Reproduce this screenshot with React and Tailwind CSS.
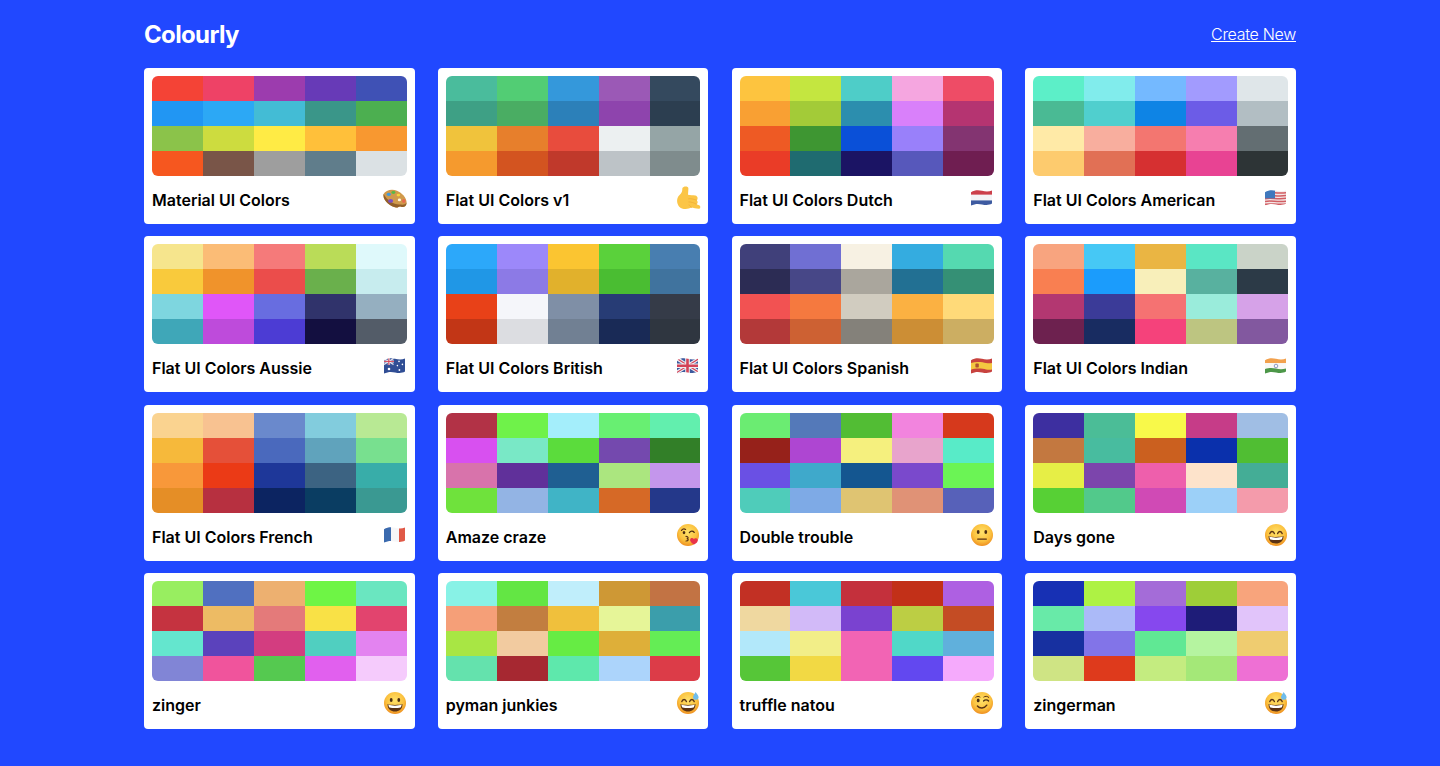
import { useId } from 'react';

const palettes = [
  { name: 'Material UI Colors', emoji: 'palette', colors: ['F44336','EE4266','9C3CAE','673AB7','3F51B5','2196F3','2CA8F5','43BCD5','3A9689','4CAF50','8BC34A','CDDC3F','FFEB45','FFC03A','F89830','F6571F','795548','9E9E9E','607D8B','DBE1E4'] },
  { name: 'Flat UI Colors v1', emoji: 'shaka', colors: ['4ABC9C','52CD74','3498DB','9B59B6','34495E','3EA085','4AAD63','2C80B9','8E44AD','2C3E50','F0C33C','E77F2C','E84C3D','ECF0F1','95A5A6','F59A2E','D35420','C0392B','BDC3C7','7F8C8D'] },
  { name: 'Flat UI Colors Dutch', emoji: 'nl', colors: ['FDC43F','C4E640','4ECDC8','F5A6E0','EE4C66','F9A033','A3CB38','2C8EAE','D980FA','B53471','EE5A24','3E9632','0A50D8','9980FA','833471','EA3C27','1F6B70','1B1464','5758BB','6F1E51'] },
  { name: 'Flat UI Colors American', emoji: 'us', colors: ['5CEFC8','81ECEC','74B9FF','A29BFE','DFE6E9','4ABA94','50CFCE','0E84E5','6C5CE7','B2BEC3','FFEAA7','F8AE9E','F37670','F67EAF','636E72','FDCB6E','E17055','D63031','E84393','2D3436'] },
  { name: 'Flat UI Colors Aussie', emoji: 'au', colors: ['F6E58D','FBBC76','F57A7A','BADC58','DFF9FB','F9CA3C','F0932B','EB4D4B','6AB04C','C7ECEE','7ED6DF','E056F8','686DE0','30336B','95AFC0','3FA7B8','BE4BDB','4C3CD4','130F40','535C68'] },
  { name: 'Flat UI Colors British', emoji: 'gb', colors: ['2CA8FA','9C88FA','FBC531','5AD13B','487EB0','2097E6','8C7AE6','E1B12C','4ABD32','40739E','E84118','F5F6FA','7F8FA6','273C75','353B48','C23616','DCDDE1','718093','192A56','2F3640'] },
  { name: 'Flat UI Colors Spanish', emoji: 'es', colors: ['40407A','706FD3','F7F1E3','34ACE0','55D9B0','2C2C54','474787','AAA69D','227093','359075','F25252','F5793F','D1CCC0','FBB142','FFDA79','B33939','CD6133','84817A','CC8E35','CCAE62'] },
  { name: 'Flat UI Colors Indian', emoji: 'in', colors: ['F8A47F','46C8F5','EAB543','5AE6C4','CAD3C8','F97F51','1B9CFC','F8EFBA','58B19F','2C3A47','B33771','3B3B98','F57272','9AECDB','D6A2E8','6D214F','182C61','F5427B','BDC581','82589F'] },
  { name: 'Flat UI Colors French', emoji: 'fr', colors: ['FAD390','F8C291','6A89CC','82CCDD','B8E994','F6B93B','E55039','4A69BD','60A3BC','78E08F','F8983A','EB3A16','1E3799','3C6382','38ADA9','E58E26','B73040','0C2461','0A3D62','3A9992'] },
  { name: 'Amaze craze', emoji: 'kiss', colors: ['B23246','6FF24A','A4EEFB','68EF72','62EFAE','D850F0','79E8C6','5BDC3C','7449AE','327F28','D873AB','60309A','1F5F92','ABE67F','C496EC','6FE23C','93B4E4','40B4C6','D66926','24388A'] },
  { name: 'Double trouble', emoji: 'neutral', colors: ['6BEC72','5479B9','52BD34','F284DE','D6391C','96211A','AE46D2','F5F07E','E8A4CC','58EBC8','6A50E4','3FA9CB','145690','7A49CC','6BF455','4FCCBA','7EAAE6','DFC472','E09276','5761B9'] },
  { name: 'Days gone', emoji: 'grin', colors: ['3D2FA0','4BBD97','F8F94A','C63C88','A0BEE4','C37840','48BC9F','CB601F','0A30AC','50BE33','E6EE46','7C45AC','EE5FAC','FDE3CB','44AD96','57D035','52C98B','D04AB5','9CD0F8','F49BAB'] },
  { name: 'zinger', emoji: 'smiley', colors: ['98EE60','5070C0','EDB070','6EF545','6AE6C0','C53340','EDBB64','E47A7A','F9E146','E2446E','64E6CE','5B42BC','D33D80','50CFC0','E383F0','8185D6','F0549C','55C950','E160EE','F5CBFC'] },
  { name: 'pyman junkies', emoji: 'sweat', colors: ['88F2E6','63E644','C0EEFB','CE9835','C27344','F59F78','C27E40','F0C03C','E6F598','3B9EAB','A8E644','F2CBA0','66EC44','DEAF39','64ED55','64E2AD','A62831','5EE8AC','ACD4FB','DC3C48'] },
  { name: 'truffle natou', emoji: 'wink', colors: ['C23024','4AC8D8','C4303C','C23018','AE60E2','EFD8A0','D2BAF8','7A42D0','BCCE44','C44C24','B2E8FA','F2EE88','F264B4','50D8C8','60B0DC','56C638','F2D944','F264B4','6248F0','F5AAFC'] },
  { name: 'zingerman', emoji: 'sweat', colors: ['1730B4','AEF244','A46CD8','9ECE38','F8A47C','68EAA8','ABBAF8','8648EE','1E1C78','E1C4FA','1730A0','8274E8','60E894','B5F4A0','EFCC70','CFE484','DE3A1C','C4EC80','A4E878','EE70D4'] },
];

// Face emoji drawn by hand, there is no colour emoji font in the sandbox
const Face = ({ children }) => {
  const id = useId();
  return (
    <svg width="24" height="24" viewBox="0 0 24 24" className="mb-1 shrink-0">
      <defs>
        <radialGradient id={id} cx="50%" cy="38%" r="62%">
          <stop offset="0%" stopColor="#FFE26A" />
          <stop offset="65%" stopColor="#FBC13E" />
          <stop offset="100%" stopColor="#EE8F20" />
        </radialGradient>
      </defs>
      <circle cx="12" cy="12" r="11" fill={`url(#${id})`} />
      {children}
    </svg>
  );
};

const Dots = () => (
  <>
    <ellipse cx="8.2" cy="9" rx="1.4" ry="2" fill="#4B2E12" />
    <ellipse cx="15.8" cy="9" rx="1.4" ry="2" fill="#4B2E12" />
  </>
);

const Grin = ({ top = 13 }) => (
  <>
    <path d={`M4.5 ${top}C7 14.2 17 14.2 19.5 ${top}C19.5 18.5 16 20.5 12 20.5S4.5 18.5 4.5 ${top}Z`} fill="#5A3214" />
    <path d={`M5.4 ${top + 0.6}C8 15 16 15 18.6 ${top + 0.6}C18.4 15.6 18 16 17.6 16.4C14 17.2 10 17.2 6.4 16.4C6 16 5.6 15.6 5.4 ${top + 0.6}Z`} fill="#fff" />
  </>
);

const HappyEyes = () => (
  <>
    <path d="M5.8 10.6C6.6 7.8 9.6 7.8 10.4 10.6" fill="none" stroke="#5A3214" strokeWidth="1.4" strokeLinecap="round" />
    <path d="M13.6 10.6C14.4 7.8 17.4 7.8 18.2 10.6" fill="none" stroke="#5A3214" strokeWidth="1.4" strokeLinecap="round" />
  </>
);

// Flags have the same waving outline
const Flag = ({ children }) => {
  const id = useId();
  return (
    <svg width="24" height="24" viewBox="0 0 24 24" className="mb-1 shrink-0">
      <defs>
        <clipPath id={id}>
          <path d="M1 6.2C5 3.6 9 4 12 4.8C15.5 5.6 19 5.8 22 4.4V17.6C19 19.4 15.5 19.2 12 18.4C9 17.7 5 17.4 1 19.6Z" />
        </clipPath>
      </defs>
      <g clipPath={`url(#${id})`} opacity="0.92">{children}</g>
    </svg>
  );
};

const emojis = {
  palette: (
    <svg width="24" height="24" viewBox="0 0 24 24" className="mb-1 shrink-0">
      <g transform="translate(0 1.5)">
        <path d="M0.6 6.5C2.5 2.5 9 1 14 3.2C19 5.4 23.6 10 23.6 15C23.6 19 20.5 20.2 18 19.2C15.5 18.2 15.5 20.6 13 20C8 19 -0.8 13 0.6 6.5Z" fill="#D09A4C" />
        <path d="M0.6 6.5C-0.8 13 8 19 13 20C15.5 20.6 15.5 18.2 18 19.2C20.5 20.2 23.6 19 23.6 15C22 18 19 17 16 17C11 17 4 13 0.6 6.5Z" fill="#93602A" />
        <ellipse cx="5.8" cy="6.8" rx="2.1" ry="1.6" fill="#3E9BE0" />
        <ellipse cx="10.4" cy="5" rx="2" ry="1.4" fill="#57B947" />
        <ellipse cx="15.4" cy="7.6" rx="1.8" ry="1.4" fill="#F5D23C" />
        <ellipse cx="7.6" cy="13.4" rx="2.5" ry="1.9" fill="#7C4FC4" />
        <ellipse cx="20.8" cy="13.6" rx="1.7" ry="2" fill="#E96A4E" />
        <ellipse cx="16.4" cy="12.4" rx="1.6" ry="1.4" fill="#FFF6E0" />
      </g>
    </svg>
  ),
  shaka: (
    <svg width="24" height="24" viewBox="0 0 24 24" className="mb-1 shrink-0 overflow-visible">
      <path d="M6.4 2C7.4 -0.2 12.4 -0.2 12.4 2.4L12 8.8C14 9.4 17 9 19.4 9.4C22 10 22.2 13.4 20.6 14.2C22.2 15.2 22 17.6 20.4 18.2L23.2 19.2C25 20 24.6 22.8 22.6 22.8C20 22.8 17.4 22 15.4 21.6C12 23.6 6 23.8 3 20.4C0.8 17.6 0.4 13 2.4 10.2C4.4 8.6 6 6.8 6.2 4.6Z" fill="#FBC546" />
      <path d="M12.6 12.8C15 12.4 18 13.2 20.6 14.2M12.8 15.9C15 15.8 18 16.8 20.4 18.2M13 19C14 19.4 14.8 20.4 15.4 21.6" fill="none" stroke="#ECA935" strokeWidth="0.7" strokeLinecap="round" />
    </svg>
  ),
  nl: (
    <Flag>
      <rect x="0" y="2" width="24" height="6.8" fill="#C8303C" />
      <rect x="0" y="8.8" width="24" height="5.6" fill="#F4F4F6" />
      <rect x="0" y="14.4" width="24" height="8" fill="#2E4E9A" />
    </Flag>
  ),
  us: (
    <Flag>
      <rect x="0" y="2" width="24" height="20" fill="#F2E4E4" />
      <path d="M0 7.4C6 5 14 8.6 24 6.4M0 10.2C6 8 14 11.4 24 9.2M0 13C6 10.8 14 14.2 24 12M0 15.8C6 13.6 14 17 24 14.8M0 18.6C6 16.4 14 19.8 24 17.6" fill="none" stroke="#CE5056" strokeWidth="1.5" />
      <rect x="0" y="2" width="11" height="10.4" fill="#2F6DB8" />
    </Flag>
  ),
  au: (
    <Flag>
      <rect x="0" y="2" width="24" height="20" fill="#1F3F8C" />
      <rect x="0" y="2" width="11" height="9.5" fill="#2C4A94" />
      <path d="M1 4.5L10.5 10.5M10.5 4.5L1 10.5" stroke="#E9E9EF" strokeWidth="1.2" />
      <path d="M5.8 3.5V11M1 7.4H11" stroke="#E9E9EF" strokeWidth="2" />
      <path d="M5.8 3.5V11M1 7.4H11" stroke="#D0344A" strokeWidth="1" />
      <circle cx="6" cy="15" r="1.3" fill="#fff" />
      <circle cx="16" cy="7.4" r="0.8" fill="#fff" />
      <circle cx="19.4" cy="10.4" r="0.8" fill="#fff" />
      <circle cx="14.4" cy="11.6" r="0.8" fill="#fff" />
      <circle cx="16.4" cy="16" r="0.9" fill="#fff" />
    </Flag>
  ),
  gb: (
    <Flag>
      <rect x="0" y="2" width="24" height="20" fill="#2C4A94" />
      <path d="M0 4L24 19M24 4L0 19" stroke="#EDEDF1" strokeWidth="3.4" />
      <path d="M0 4L24 19M24 4L0 19" stroke="#D0344A" strokeWidth="1.2" />
      <path d="M11.5 2V22M0 11.8H24" stroke="#EDEDF1" strokeWidth="4.6" />
      <path d="M11.5 2V22M0 11.8H24" stroke="#D0344A" strokeWidth="2.6" />
    </Flag>
  ),
  es: (
    <Flag>
      <rect x="0" y="2" width="24" height="20" fill="#C4332F" />
      <path d="M0 9.4C6 7 13 8.4 16 9C19 9.6 21 9.4 24 8.4V15C21 16 19 16 16 15.4C13 14.8 6 13.6 0 16Z" fill="#F4C430" />
      <rect x="5.4" y="9.6" width="3.4" height="4" rx="0.8" fill="#A8451F" />
    </Flag>
  ),
  in: (
    <Flag>
      <rect x="0" y="2" width="24" height="7.2" fill="#F19A3E" />
      <rect x="0" y="9.2" width="24" height="4.8" fill="#F8F8F6" />
      <rect x="0" y="14" width="24" height="8" fill="#3E8F3A" />
      <path d="M0 10.2C5 8.4 9 9 12 9.6C15.5 10.4 19 10.6 24 9V14C19 15.6 15.5 15.4 12 14.6C9 13.9 5 13.4 0 15.4Z" fill="#F8F8F6" />
      <circle cx="12" cy="12" r="1.8" fill="none" stroke="#3C4E9E" strokeWidth="0.6" />
    </Flag>
  ),
  fr: (
    <Flag>
      <rect x="0" y="2" width="8" height="20" fill="#2B5EA8" />
      <rect x="8" y="2" width="8" height="20" fill="#F6F6F8" />
      <rect x="16" y="2" width="8" height="20" fill="#DE4B38" />
    </Flag>
  ),
  kiss: (
    <Face>
      <path d="M5.5 7.4C6.5 6 8.4 5.6 9.6 6.4" fill="none" stroke="#5A3214" strokeWidth="1.2" strokeLinecap="round" />
      <ellipse cx="8" cy="9.6" rx="1.3" ry="1.6" fill="#4B2E12" />
      <path d="M13.4 9.6C14.6 7.8 17 7.8 18.2 9.4" fill="none" stroke="#4B2E12" strokeWidth="1.3" strokeLinecap="round" />
      <path d="M10 13.4C12.6 13.6 12.6 15.4 10.8 15.6C12.8 15.8 12.8 18 10 18" fill="none" stroke="#5A3214" strokeWidth="1.2" strokeLinecap="round" />
      <path d="M18 21.6C15 19.6 13.6 18 14.2 16.2C14.8 14.6 17 14.6 17.8 16C18.8 14.8 21.4 15 21.8 16.8C22.2 18.6 20.4 20.4 18 21.6Z" fill="#E8334A" />
    </Face>
  ),
  neutral: (
    <Face>
      <Dots />
      <rect x="7" y="15.4" width="10" height="1.4" rx="0.7" fill="#5A3214" />
    </Face>
  ),
  grin: (
    <Face>
      <HappyEyes />
      <Grin />
    </Face>
  ),
  smiley: (
    <Face>
      <Dots />
      <Grin />
    </Face>
  ),
  sweat: (
    <Face>
      <HappyEyes />
      <Grin />
      <path d="M19.6 1C21 3.2 22.6 4.6 22.6 6.2C22.6 7.8 21.2 8.8 19.8 8.8C18.2 8.8 17 7.6 17 6.2C17 4.6 18.6 3 19.6 1Z" fill="#6FBCEB" />
    </Face>
  ),
  wink: (
    <Face>
      <ellipse cx="8.2" cy="9.4" rx="1.4" ry="1.9" fill="#4B2E12" />
      <path d="M5.8 6.2C7 5.2 9 5.2 10 6" fill="none" stroke="#5A3214" strokeWidth="1" strokeLinecap="round" />
      <path d="M13.6 10C14.8 8.4 17.4 8.4 18.6 10" fill="none" stroke="#4B2E12" strokeWidth="1.3" strokeLinecap="round" />
      <path d="M13.8 6C15 5 17.6 5 18.8 6.4" fill="none" stroke="#5A3214" strokeWidth="1" strokeLinecap="round" />
      <path d="M7.4 15C9.6 17.8 14.4 17.8 16.8 14.2" fill="none" stroke="#5A3214" strokeWidth="1.4" strokeLinecap="round" />
    </Face>
  ),
};

const Card = ({ name, emoji, colors }) => (
  <div className="rounded bg-white px-2 pt-2">
    <div className="grid h-[100px] grid-cols-5 grid-rows-4 overflow-hidden rounded-md">
      {colors.map((c, i) => (
        <div key={i} style={{ backgroundColor: `#${c}` }} />
      ))}
    </div>
    <div className="flex h-12 items-center justify-between">
      <span className="text-base font-semibold text-black">{name}</span>
      {emojis[emoji]}
    </div>
  </div>
);

export default function App() {
  return (
    <div className="min-h-[766px] bg-[#2148ff] font-['Inter',sans-serif]">
      <div className="mx-auto w-[1152px]">
        <header className="flex h-[68px] items-center justify-between pt-0.5">
          <h1 className="text-2xl font-bold tracking-[-0.65px] text-white">Colourly</h1>
          <a href="#" className="mb-0.5 text-base font-light tracking-[-0.3px] text-white underline">Create New</a>
        </header>
        <div className="grid grid-cols-4 gap-x-[23.04px] gap-y-[12.4px]">
          {palettes.map((p) => (
            <Card key={p.name} {...p} />
          ))}
        </div>
      </div>
    </div>
  );
}
